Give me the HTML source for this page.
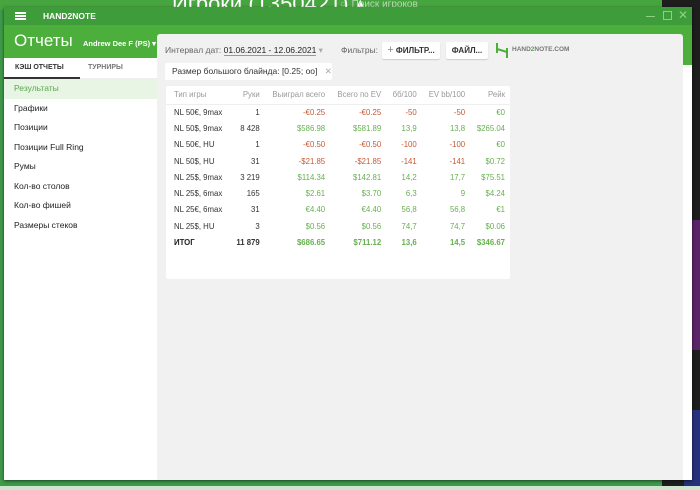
<!DOCTYPE html>
<html><head><meta charset="utf-8"><style>
*{margin:0;padding:0;box-sizing:border-box}
body{width:700px;height:490px;overflow:hidden;position:relative;background:#1e1e1e;font-family:"Liberation Sans","Noto Sans CJK SC",sans-serif}
.abs{position:absolute}
.bgbar{left:0;top:0;width:662px;height:10px;background:#47a53f;overflow:hidden}
.bgbar .t{position:absolute;left:172px;top:-9px;font-size:22px;color:#fff}
.bgbar .s{position:absolute;left:340px;top:-1px;font-size:10px;color:#b8dcb3}
.lstrip{left:0;top:0;width:6px;height:490px;background:#3f9a4a}
.bgbot{left:0;top:480px;width:662px;height:10px;background:#3f9a4a}
.bgbot2{left:0;top:486px;width:700px;height:4px;background:#cfe4cf}
.blue{left:684px;top:410px;width:16px;height:80px;background:#27307a}
.purple{left:692px;top:220px;width:8px;height:130px;background:#5a2468}
.win{left:4px;top:7px;width:688px;height:473px;background:#fff;box-shadow:0 1px 3px rgba(0,0,0,.6)}
.title{left:0;top:0;width:688px;height:18px;background:#3f9c3a}
.hdr{left:0;top:18px;width:688px;height:40px;background:#4caf3c}
.content{left:153px;top:27px;width:526px;height:446px;background:#f1f1f1;border-radius:3px 3px 0 0}
.side{left:0;top:51px;width:153px;height:422px;background:#fff}
.menu div{height:19.5px;line-height:19.5px;padding-left:10px;font-size:8.5px;color:#222}
.card{left:162px;top:79px;width:344px;height:193px;background:#fff;border-radius:2px}
table{border-collapse:collapse;width:100%;font-size:7.8px}
td,th{text-align:right;padding:0 5px;height:16.3px;white-space:nowrap}
th{font-weight:normal;color:#999;height:18px;border-bottom:1px solid #eee}
td:first-child,th:first-child{text-align:left;padding-left:8px;color:#333}
.r{color:#c45a35}.g{color:#66b04f}.k{color:#333}
.tot td{font-weight:bold}
.btn{background:#fff;height:17px;line-height:17px;font-size:8px;font-weight:bold;color:#333;border-radius:2px;box-shadow:0 1px 1px rgba(0,0,0,.15);text-align:center}
</style></head><body>
<div class="abs lstrip"></div>
<div class="abs bgbar"><span class="t">Игроки (1350421) ▴</span><span class="s">○ &nbsp;Поиск игроков</span></div>
<div class="abs blue"></div><div class="abs purple"></div>
<div class="abs bgbot"></div><div class="abs bgbot2"></div>
<div class="abs win">
 <div class="abs title">
  <div class="abs" style="left:11px;top:5px;width:11px;height:2px;background:#fff;box-shadow:0 3px 0 #fff,0 6px 0 #fff"></div>
  <div class="abs" style="left:39px;top:4px;font-size:8.5px;font-weight:bold;color:#fff">HAND2NOTE</div>
  <div class="abs" style="left:642px;top:9px;width:9px;height:1px;background:#8fcf86"></div>
  <div class="abs" style="left:659px;top:4px;width:9px;height:9px;border:1px solid #8fcf86"></div>
  <div class="abs" style="left:674px;top:1px;font-size:12px;color:#8fcf86">✕</div>
 </div>
 <div class="abs hdr">
  <div class="abs" style="left:10px;top:6px;font-size:17px;color:#fff">Отчеты</div>
  <div class="abs" style="left:79px;top:14px;font-size:7.5px;font-weight:bold;color:#fff">Andrew Dee F (PS) ▾</div>
 </div>
 <div class="abs content">
  <div class="abs" style="left:8px;top:11px;font-size:8.5px;color:#666">Интервал дат: <span style="color:#222;border-bottom:1px solid #999">01.06.2021 - 12.06.2021</span> <span style="color:#aaa">▾</span></div>
  <div class="abs" style="left:184px;top:11px;font-size:8.5px;color:#666">Фильтры:</div>
  <div class="abs btn" style="left:225px;top:8px;width:58px"><span style="font-weight:normal;color:#888;font-size:11px">+</span> ФИЛЬТР...</div>
  <div class="abs btn" style="left:289px;top:8px;width:42px">ФАЙЛ...</div>
  <svg class="abs" style="left:338px;top:8px" width="14" height="17"><path d="M2 1v10M12 6v10M2 7L12 10" stroke="#4caf3c" stroke-width="2" fill="none"/></svg>
  <div class="abs" style="left:355px;top:12px;font-size:6.5px;font-weight:bold;color:#777">HAND<span style="color:#4caf3c">2</span>NOTE.COM</div>
  <div class="abs btn" style="left:8px;top:29px;width:167px;font-weight:normal;font-size:8.5px;text-align:left;padding-left:7px;box-shadow:none">Размер большого блайнда: [0.25; oo] <span style="color:#aaa;margin-left:5px">✕</span></div>
 </div>
 <div class="abs side">
  <div style="height:21px;border-bottom:1px solid #eee;position:relative;font-size:7px;font-weight:bold">
   <span class="abs" style="left:11px;top:6px;color:#333">КЭШ ОТЧЕТЫ</span>
   <span class="abs" style="left:84px;top:6px;color:#777">ТУРНИРЫ</span>
   <div class="abs" style="left:0;top:19px;width:76px;height:2px;background:#333"></div>
  </div>
  <div class="menu">
   <div style="background:#e8f4e4;color:#5aa84b">Результаты</div>
   <div>Графики</div><div>Позиции</div><div>Позиции Full Ring</div><div>Румы</div><div>Кол-во столов</div><div>Кол-во фишей</div><div>Размеры стеков</div>
  </div>
 </div>
 <div class="abs card"><table>
  <tr><th style="color:#999">Тип игры</th><th>Руки</th><th>Выиграл всего</th><th>Всего по EV</th><th>бб/100</th><th>EV bb/100</th><th>Рейк</th></tr>
  <tr><td>NL 50€, 9max</td><td class="k">1</td><td class="r">-€0.25</td><td class="r">-€0.25</td><td class="r">-50</td><td class="r">-50</td><td class="g">€0</td></tr>
  <tr><td>NL 50$, 9max</td><td class="k">8 428</td><td class="g">$586.98</td><td class="g">$581.89</td><td class="g">13,9</td><td class="g">13,8</td><td class="g">$265.04</td></tr>
  <tr><td>NL 50€, HU</td><td class="k">1</td><td class="r">-€0.50</td><td class="r">-€0.50</td><td class="r">-100</td><td class="r">-100</td><td class="g">€0</td></tr>
  <tr><td>NL 50$, HU</td><td class="k">31</td><td class="r">-$21.85</td><td class="r">-$21.85</td><td class="r">-141</td><td class="r">-141</td><td class="g">$0.72</td></tr>
  <tr><td>NL 25$, 9max</td><td class="k">3 219</td><td class="g">$114.34</td><td class="g">$142.81</td><td class="g">14,2</td><td class="g">17,7</td><td class="g">$75.51</td></tr>
  <tr><td>NL 25$, 6max</td><td class="k">165</td><td class="g">$2.61</td><td class="g">$3.70</td><td class="g">6,3</td><td class="g">9</td><td class="g">$4.24</td></tr>
  <tr><td>NL 25€, 6max</td><td class="k">31</td><td class="g">€4.40</td><td class="g">€4.40</td><td class="g">56,8</td><td class="g">56,8</td><td class="g">€1</td></tr>
  <tr><td>NL 25$, HU</td><td class="k">3</td><td class="g">$0.56</td><td class="g">$0.56</td><td class="g">74,7</td><td class="g">74,7</td><td class="g">$0.06</td></tr>
  <tr class="tot"><td style="color:#222">ИТОГ</td><td class="k">11 879</td><td class="g">$686.65</td><td class="g">$711.12</td><td class="g">13,6</td><td class="g">14,5</td><td class="g">$346.67</td></tr>
 </table></div>
</div>
</body></html>
